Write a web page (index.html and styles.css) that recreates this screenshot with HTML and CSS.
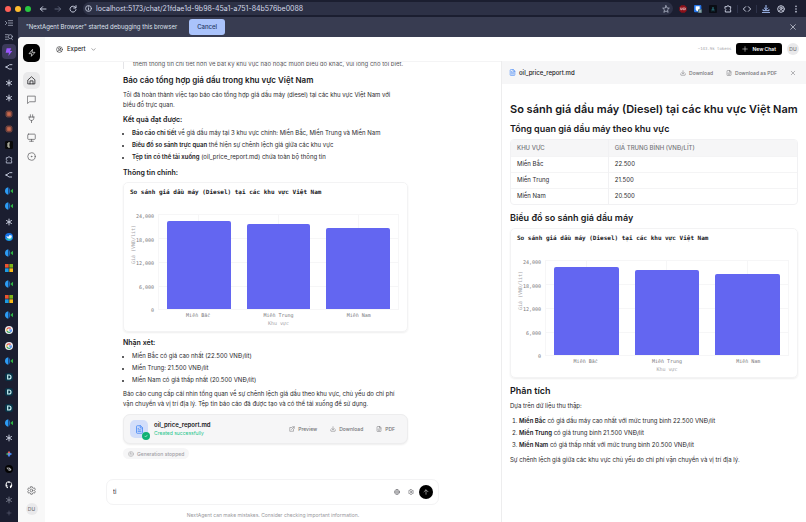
FILE: index.html
```html
<!DOCTYPE html>
<html lang="vi">
<head>
<meta charset="utf-8">
<title>NextAgent</title>
<link rel="stylesheet" href="styles.css">
</head>
<body>
<svg class="defs" aria-hidden="true">
  <symbol id="ast" viewBox="0 0 24 24"><path d="M12 2v20M3.500 7l17 10M20.500 7l-17 10" stroke="#c9cede" stroke-width="3" fill="none"/></symbol>
  <symbol id="branch" viewBox="0 0 24 24"><path d="M22 5H14L4 12l8 6h9" stroke="#bcc2d4" stroke-width="3" fill="none"/><circle cx="4" cy="12" r="3" fill="#bcc2d4"/></symbol>
  <symbol id="burst" viewBox="0 0 24 24"><path d="M12 1v22M1 12h22M4 4l16 16M20 4L4 20M7.500 2l9 20M2 16.500l20-9M2 7.500l20 9M7.500 22l9-20" stroke="#c9694d" stroke-width="2.200"/><circle cx="12" cy="12" r="5" fill="#c9694d"/></symbol>
  <symbol id="meet" viewBox="0 0 24 24"><path d="M10 1C3 2 0 7 0 12s3 10 10 11z" fill="#2d9cf4"/><path d="M11 2v20c3-2 4-5 4-10s-1-8-4-10z" fill="#176bc4"/><path d="M16 12l8-7v14z" fill="#2fb344"/></symbol>
  <symbol id="ms" viewBox="0 0 24 24"><path d="M0 0h11v11H0z" fill="#ea5430"/><path d="M13 0h11v11H13z" fill="#7cb518"/><path d="M0 13h11v11H0z" fill="#1b9ce3"/><path d="M13 13h11v11H13z" fill="#f8b919"/></symbol>
  <symbol id="goog" viewBox="0 0 24 24"><circle cx="12" cy="12" r="12" fill="#e9ebf0"/><g fill="none" stroke-width="3.500"><path d="M17 7.500A7 7 0 0 0 6 9" stroke="#df5145"/><path d="M6 9a7 7 0 0 0 0 6" stroke="#edb52c"/><path d="M6 15a7 7 0 0 0 10 3" stroke="#37a35b"/><path d="M16 18a7 7 0 0 0 3-6h-7" stroke="#4286ee"/></g></symbol>
  <symbol id="dee" viewBox="0 0 24 24"><rect width="24" height="24" rx="7" fill="#093448"/><path d="M8 6h4a6 6 0 0 1 0 12H8z" fill="none" stroke="#c7f1f4" stroke-width="3.500"/></symbol>
  <symbol id="puzzle" viewBox="0 0 24 24"><path d="M4 5h5a3 3 0 0 1 6 0h5v5a3 3 0 0 0 0 5v6H4v-5a3 3 0 0 0 0-5z"/></symbol>
  <symbol id="file" viewBox="0 0 24 24"><path d="M14 2H6a2 2 0 0 0-2 2v16a2 2 0 0 0 2 2h12a2 2 0 0 0 2-2V8zM14 2v6h6M8 9h2M8 13h8M8 17h8"/></symbol>
  <symbol id="filedown" viewBox="0 0 24 24"><path d="M14 2H6a2 2 0 0 0-2 2v16a2 2 0 0 0 2 2h12a2 2 0 0 0 2-2V8zM14 2v6h6M12 10v8M9 15l3 3 3-3"/></symbol>
  <symbol id="down" viewBox="0 0 24 24"><path d="M3 15v4a2 2 0 0 0 2 2h14a2 2 0 0 0 2-2v-4M7 10l5 5 5-5M12 15V3"/></symbol>
  <symbol id="close" viewBox="0 0 24 24"><path d="M5 5l14 14M19 5L5 19"/></symbol>
  <symbol id="gear" viewBox="0 0 24 24"><path d="M10 2h4l1 3 2 1 3-1 2 4-2 2v2l2 2-2 4-3-1-2 1-1 3h-4l-1-3-2-1-3 1-2-4 2-2v-2L2 9l2-4 3 1 2-1z"/><circle cx="12" cy="12" r="3.500"/></symbol>
  <symbol id="user" viewBox="0 0 24 24"><circle cx="12" cy="12" r="10"/><circle cx="12" cy="9.500" r="3.500"/><path d="M5.500 19c1-3 3.500-4.500 6.500-4.500s5.500 1.500 6.500 4.500"/></symbol>
</svg>

<div class="window">
  <header class="toolbar">
    <div class="lights"><i class="red"></i><i class="yellow"></i><i class="green"></i></div>
    <button class="tool" aria-label="Back"><svg class="ic" viewBox="0 0 24 24"><path d="M21 12H4M11 5l-7 7 7 7"/></svg></button>
    <button class="tool dim" aria-label="Forward"><svg class="ic" viewBox="0 0 24 24"><path d="M3 12h17M13 5l7 7-7 7"/></svg></button>
    <button class="tool" aria-label="Reload"><svg class="ic" viewBox="0 0 24 24"><path d="M20 8a9 9 0 1 0 1 6M21 2v7h-7"/></svg></button>
    <div class="address">
      <svg class="ic info" viewBox="0 0 24 24"><circle cx="12" cy="12" r="10"/><path d="M12 11v6M12 6v1"/></svg>
      <input class="url" aria-label="Address" value="localhost:5173/chat/21fdae1d-9b98-45a1-a751-84b576be0088">
      <svg class="ic star" viewBox="0 0 24 24"><path d="M12 2l3 7 7 .5-5.500 5 2 7.500-6.500-4-6.500 4 2-7.500-5.500-5L9 9z"/></svg>
    </div>
    <div class="extensions">
      <svg class="ic" viewBox="0 0 24 24"><path d="M7 1h10l6 6v10l-6 6H7l-6-6V7z" fill="#8b1119" stroke="none"/><path d="M5 9v5h4V9M13 9h6v5h-6z" stroke="#f3cbd0" stroke-width="2"/></svg>
      <svg class="ic" viewBox="0 0 24 24"><rect width="22" height="22" rx="3" fill="#2474e8" stroke="none"/><path d="M5 4h12v8c0 4-3 6-6 7-3-1-6-3-6-7z" fill="#fff" stroke="none"/><rect x="12" y="13" width="12" height="11" rx="2" fill="#55777a" stroke="none"/><path d="M18 16v5"/></svg>
      <svg class="ic" viewBox="0 0 24 24"><rect width="24" height="24" rx="3" fill="#0a0d14" stroke="none"/><path d="M9 18l3-12 3 12M9 14h6" stroke="#28717c" stroke-width="2"/></svg>
      <svg class="ic"><use href="#puzzle"/></svg>
      <i class="rule"></i>
      <svg class="ic" viewBox="0 0 24 24"><path d="M8 5l-7 7 7 7M16 5l7 7-7 7"/></svg>
      <i class="rule"></i>
      <svg class="ic blue" viewBox="0 0 24 24"><path d="M12 1v12M7 9l5 5 5-5M3 14v3h18v-3M1 23h22"/></svg>
      <svg class="ic"><use href="#user"/></svg>
      <svg class="ic" viewBox="0 0 24 24"><g fill="currentColor" stroke="none"><circle cx="12" cy="4" r="2.500"/><circle cx="12" cy="12" r="2.500"/><circle cx="12" cy="20" r="2.500"/></g></svg>
    </div>
  </header>

  <nav class="tabs" aria-label="Tabs">
    <div class="tab-tools">
      <svg class="ic" viewBox="0 0 24 24"><path d="M10 5h13M10 12h13M10 19h13M1 7l5 5-5 5"/></svg>
      <svg class="ic" viewBox="0 0 24 24"><path d="M1 5h9M1 12h6M1 19h9M19 16l4 5"/><circle cx="16" cy="11" r="6"/></svg>
    </div>
    <div class="tab-list">
      <a href="#" class="tab active" aria-label="Chat"><svg viewBox="0 0 24 24"><path d="M5 1h14l-4 8h7L10 24l2-10H2z" fill="#9b56ff"/></svg></a>
      <a href="#" class="tab"><svg><use href="#branch"/></svg></a>
      <a href="#" class="tab"><svg><use href="#ast"/></svg></a>
      <a href="#" class="tab"><svg><use href="#ast"/></svg></a>
      <a href="#" class="tab"><svg><use href="#burst"/></svg></a>
      <a href="#" class="tab"><svg><use href="#burst"/></svg></a>
      <a href="#" class="tab"><svg viewBox="0 0 24 24"><rect width="24" height="24" rx="4" fill="#0b0b0c"/><path d="M15 6H9v12h6M9 12h5" stroke="#dfe0c8" stroke-width="3" fill="none"/></svg></a>
      <a href="#" class="tab"><svg class="line"><use href="#puzzle"/></svg></a>
      <a href="#" class="tab"><svg><use href="#branch"/></svg></a>
      <a href="#" class="tab"><svg><use href="#meet"/></svg></a>
      <a href="#" class="tab"><svg><use href="#meet"/></svg></a>
      <a href="#" class="tab"><svg><use href="#ast"/></svg></a>
      <a href="#" class="tab"><svg viewBox="0 0 24 24"><circle cx="12" cy="12" r="12" fill="#1674e8"/><path d="M1 15c5 9 18 11 22-2-6 5-14 5-22 2z" fill="#27c9b8"/><path d="M4 9l6 2 4-5 7 2-2 7c-5 4-13 3-15-6z" fill="#e9faff"/></svg></a>
      <a href="#" class="tab"><svg><use href="#meet"/></svg></a>
      <a href="#" class="tab"><svg><use href="#ms"/></svg></a>
      <a href="#" class="tab"><svg><use href="#meet"/></svg></a>
      <a href="#" class="tab"><svg><use href="#ms"/></svg></a>
      <a href="#" class="tab"><svg><use href="#meet"/></svg></a>
      <a href="#" class="tab"><svg><use href="#goog"/></svg></a>
      <a href="#" class="tab"><svg><use href="#goog"/></svg></a>
      <a href="#" class="tab"><svg><use href="#meet"/></svg></a>
      <a href="#" class="tab"><svg><use href="#dee"/></svg></a>
      <a href="#" class="tab"><svg><use href="#dee"/></svg></a>
      <a href="#" class="tab"><svg><use href="#dee"/></svg></a>
      <a href="#" class="tab"><svg><use href="#meet"/></svg></a>
      <a href="#" class="tab"><svg><use href="#ast"/></svg></a>
      <a href="#" class="tab"><svg viewBox="0 0 24 24"><path d="M12 2l4 7H8z" fill="#ef625b"/><path d="M2 12l7-4v8z" fill="#44a860"/><path d="M22 12l-7-4v8z" fill="#478cf6"/><path d="M12 22l4-7H8z" fill="#478cf6"/><path d="M9 9h6v6H9z" fill="#7889d8"/></svg></a>
      <a href="#" class="tab"><svg viewBox="0 0 24 24"><circle cx="12" cy="12" r="12" fill="#030303"/><path d="M5 9h9v4h5M7 9l4 7h6l-3-7" stroke="#d9dbe0" stroke-width="2" fill="none"/></svg></a>
      <a href="#" class="tab"><svg viewBox="0 0 24 24"><path d="M12 1a11 11 0 0 0-4 21c1 0 1-3 1-4-3 1-4-2-5-3 2 0 3 2 5 1l1-1c-4-1-5-3-5-6l1-3V4l3 1h6l3-1v3l1 2c0 4-2 5-5 6l1 2v5A11 11 0 0 0 12 1z" fill="#fff"/></svg></a>
      <a href="#" class="tab faded"><svg><use href="#ast"/></svg></a>
    </div>
    <button class="tab-add" aria-label="New tab"><svg class="ic" viewBox="0 0 24 24"><path d="M12 4v16M4 12h16"/></svg></button>
  </nav>

  <div class="page">
    <div class="debug">
      <span>"NextAgent Browser" started debugging this browser</span>
      <button class="cancel">Cancel</button>
      <button class="dismiss" aria-label="Dismiss"><svg class="ic"><use href="#close"/></svg></button>
    </div>

    <div class="app">
      <nav class="rail" aria-label="Main">
        <a href="#" class="brand" aria-label="NextAgent"><svg class="ic" viewBox="0 0 24 24"><path d="M13 2L3 14h8l-1 8 11-12h-8z"/></svg></a>
        <a href="#" class="rail-item current" aria-label="Home"><svg class="ic" viewBox="0 0 24 24"><path d="M3 10l9-8 9 8v11H3zM8 21v-8h8v8"/></svg></a>
        <a href="#" class="rail-item" aria-label="Messages"><svg class="ic" viewBox="0 0 24 24"><path d="M2 3h20v15H7l-5 4z"/></svg></a>
        <a href="#" class="rail-item" aria-label="Connections"><svg class="ic" viewBox="0 0 24 24"><path d="M9 2v6M15 2v6M5 8h14M6 8v4c0 7 12 7 12 0V8M12 17v6"/></svg></a>
        <a href="#" class="rail-item" aria-label="Computer"><svg class="ic" viewBox="0 0 24 24"><rect x="2" y="3" width="20" height="14" rx="2"/><path d="M12 17v5M7 22h10"/></svg></a>
        <a href="#" class="rail-item" aria-label="Record"><svg class="ic" viewBox="0 0 24 24"><circle cx="12" cy="12" r="10"/><circle cx="12" cy="12" r="1"/></svg></a>
        <a href="#" class="rail-item last" aria-label="Settings"><svg class="ic"><use href="#gear"/></svg></a>
        <button class="avatar">DU</button>
      </nav>

      <div class="workspace">
        <header class="app-bar">
          <button class="mode"><svg class="ic"><use href="#user"/></svg>Expert<svg class="ic chevron" viewBox="0 0 24 24"><path d="M4 8l8 8 8-8"/></svg></button>
          <span class="tokens">~143.9k tokens</span>
          <button class="new-chat"><svg class="ic" viewBox="0 0 24 24"><path d="M12 3v18M3 12h18"/></svg>New Chat</button>
          <button class="avatar">DU</button>
        </header>

        <div class="columns">
          <main class="chat">
            <div class="thread">
              <blockquote>thêm thông tin chi tiết hơn về bất kỳ khu vực nào hoặc muốn biểu đồ khác, vui lòng cho tôi biết.</blockquote>
              <h2>Báo cáo tổng hợp giá dầu trong khu vực Việt Nam</h2>
              <p>Tôi đã hoàn thành việc tạo báo cáo tổng hợp giá dầu máy (diesel) tại các khu vực Việt Nam với biểu đồ trực quan.</p>
              <h3>Kết quả đạt được:</h3>
              <ul>
                <li><b>Báo cáo chi tiết</b> về giá dầu máy tại 3 khu vực chính: Miền Bắc, Miền Trung và Miền Nam</li>
                <li><b>Biểu đồ so sánh trực quan</b> thể hiện sự chênh lệch giá giữa các khu vực</li>
                <li><b>Tệp tin có thể tải xuống</b> (oil_price_report.md) chứa toàn bộ thông tin</li>
              </ul>
              <h3>Thông tin chính:</h3>
              <figure class="chart">
                <figcaption>So sánh giá dầu máy (Diesel) tại các khu vực Việt Nam</figcaption>
                <div class="chart-body">
                  <div class="y-title">Giá (VNĐ/lít)</div>
                  <div class="y-axis"><span>24,000</span><span>18,000</span><span>12,000</span><span>6,000</span><span>0</span></div>
                  <div class="plot">
                    <div class="slot"><div class="bar" style="height:94%"></div></div>
                    <div class="slot"><div class="bar" style="height:90%"></div></div>
                    <div class="slot"><div class="bar" style="height:86%"></div></div>
                  </div>
                  <div class="x-axis"><span>Miền Bắc</span><span>Miền Trung</span><span>Miền Nam</span></div>
                  <div class="x-title">Khu vực</div>
                </div>
              </figure>
              <h3>Nhận xét:</h3>
              <ul>
                <li>Miền Bắc có giá cao nhất (22.500 VNĐ/lít)</li>
                <li>Miền Trung: 21.500 VNĐ/lít</li>
                <li>Miền Nam có giá thấp nhất (20.500 VNĐ/lít)</li>
              </ul>
              <p>Báo cáo cung cấp cái nhìn tổng quan về sự chênh lệch giá dầu theo khu vực, chủ yếu do chi phí vận chuyển và vị trí địa lý. Tệp tin báo cáo đã được tạo và có thể tải xuống để sử dụng.</p>
              <div class="file-card">
                <div class="thumb"><svg class="ic"><use href="#file"/></svg><span class="done"><svg class="ic" viewBox="0 0 24 24"><path d="M5 13l5 5 9-11"/></svg></span></div>
                <div class="file-info"><strong>oil_price_report.md</strong><span>Created successfully</span></div>
                <button class="action"><svg class="ic" viewBox="0 0 24 24"><path d="M14 3h7v7M21 3L10 14M18 13v8H3V6h8"/></svg>Preview</button>
                <button class="action"><svg class="ic"><use href="#down"/></svg>Download</button>
                <button class="action"><svg class="ic"><use href="#filedown"/></svg>PDF</button>
              </div>
              <div class="stopped"><svg class="ic" viewBox="0 0 24 24"><circle cx="12" cy="12" r="10"/><rect x="8" y="8" width="8" height="8" rx="2"/></svg>Generation stopped</div>
            </div>
            <form class="composer">
              <input aria-label="Message" value="ti">
              <button type="button" aria-label="Web"><svg class="ic" viewBox="0 0 24 24"><circle cx="12" cy="12" r="10"/><path d="M2 12h20M12 2c-6 6-6 14 0 20 6-6 6-14 0-20z"/></svg></button>
              <button type="button" aria-label="Options"><svg class="ic"><use href="#gear"/></svg></button>
              <button type="button" class="send" aria-label="Send"><svg class="ic" viewBox="0 0 24 24"><path d="M12 21V4M4 11l8-8 8 8"/></svg></button>
            </form>
            <p class="disclaimer">NextAgent can make mistakes. Consider checking important information.</p>
          </main>

          <aside class="preview">
            <header class="preview-bar">
              <svg class="ic doc-icon"><use href="#file"/></svg>
              <strong>oil_price_report.md</strong>
              <button class="action"><svg class="ic"><use href="#down"/></svg>Download</button>
              <button class="action"><svg class="ic"><use href="#filedown"/></svg>Download as PDF</button>
              <button class="action" aria-label="Close"><svg class="ic"><use href="#close"/></svg></button>
            </header>
            <article class="doc">
              <h1>So sánh giá dầu máy (Diesel) tại các khu vực Việt Nam</h1>
              <h2>Tổng quan giá dầu máy theo khu vực</h2>
              <div class="table-wrap">
                <table>
                  <thead><tr><th>KHU VỰC</th><th>GIÁ TRUNG BÌNH (VNĐ/LÍT)</th></tr></thead>
                  <tbody>
                    <tr><td>Miền Bắc</td><td>22.500</td></tr>
                    <tr><td>Miền Trung</td><td>21.500</td></tr>
                    <tr><td>Miền Nam</td><td>20.500</td></tr>
                  </tbody>
                </table>
              </div>
              <h2>Biểu đồ so sánh giá dầu máy</h2>
              <figure class="chart">
                <figcaption>So sánh giá dầu máy (Diesel) tại các khu vực Việt Nam</figcaption>
                <div class="chart-body">
                  <div class="y-title">Giá (VNĐ/lít)</div>
                  <div class="y-axis"><span>24,000</span><span>18,000</span><span>12,000</span><span>6,000</span><span>0</span></div>
                  <div class="plot">
                    <div class="slot"><div class="bar" style="height:94%"></div></div>
                    <div class="slot"><div class="bar" style="height:90%"></div></div>
                    <div class="slot"><div class="bar" style="height:86%"></div></div>
                  </div>
                  <div class="x-axis"><span>Miền Bắc</span><span>Miền Trung</span><span>Miền Nam</span></div>
                  <div class="x-title">Khu vực</div>
                </div>
              </figure>
              <h2>Phân tích</h2>
              <p>Dựa trên dữ liệu thu thập:</p>
              <ol>
                <li><b>Miền Bắc</b> có giá dầu máy cao nhất với mức trung bình 22.500 VNĐ/lít</li>
                <li><b>Miền Trung</b> có giá trung bình 21.500 VNĐ/lít</li>
                <li><b>Miền Nam</b> có giá thấp nhất với mức trung bình 20.500 VNĐ/lít</li>
              </ol>
              <p>Sự chênh lệch giá giữa các khu vực chủ yếu do chi phí vận chuyển và vị trí địa lý.</p>
            </article>
          </aside>
        </div>
      </div>
    </div>
  </div>
</div>
</body>
</html>
```
FILE: styles.css
```css
* { box-sizing: border-box; }
body, h1, h2, h3, p, ul, ol, figure, blockquote { margin: 0; padding: 0; }
body { font: 6px/10px Inter, "Liberation Sans", sans-serif; color: #29292c; background: #1b1e30; }
button, input { font: inherit; color: inherit; border: 0; background: none; padding: 0; margin: 0; outline: 0; }
button { display: flex; align-items: center; justify-content: center; white-space: nowrap; }
a { color: inherit; text-decoration: none; }
.defs { position: absolute; width: 0; height: 0; }
.ic { display: block; flex: none; width: 8px; height: 8px; fill: none; stroke: currentColor; stroke-width: 2; stroke-linecap: round; stroke-linejoin: round; }

.window { display: grid; grid-template: 17px minmax(0, 1fr) / 18px minmax(0, 1fr); height: 100vh; overflow: hidden; }
.toolbar { grid-column: 1 / 3; display: flex; align-items: center; background: #1b1e30; color: #c6cbdc; padding: 0 6px 0 5px; }
.toolbar .ic { stroke-width: 3; }
.lights { display: flex; gap: 4px; margin-right: 4px; }
.lights i { width: 6px; height: 6px; border-radius: 50%; }
.red { background: #ff5f57; }
.yellow { background: #febc2e; }
.green { background: #28c840; }
.tool { width: 15px; }
.dim { color: #5e647a; }
.address { flex: 1; display: flex; align-items: center; height: 13px; margin-left: 3px; padding: 0 3px 0 1px; gap: 4px; border-radius: 7px; background: #2d3146; }
.address .info { width: 7px; height: 7px; margin-left: 1px; }
.address .star { stroke-width: 2; }
.url { flex: 1; min-width: 0; font-size: 7px; color: #d4d8e6; }
.extensions { display: flex; align-items: center; gap: 7px; padding-left: 6px; }
.rule { width: 1px; height: 8px; margin: 0 -2px; background: #2d3249; }
.blue { color: #a9c4fb; }

.tabs { display: flex; flex-direction: column; min-height: 0; background: #1b1e30; color: #bcc2d4; }
.tab-tools { display: flex; flex-direction: column; align-items: center; gap: 6px; padding: 2px 0 3px; }
.tab-list { flex: 1; min-height: 0; display: flex; flex-direction: column; padding: 0 2px; }
.tab { flex: 1; min-height: 0; display: flex; align-items: center; justify-content: center; border-radius: 4px; }
.tab svg { width: 8px; height: 8px; }
.tab .line { fill: none; stroke: #a7adc0; stroke-width: 3; }
.active { background: #3c3a5a; }
.faded { opacity: .5; }
.tab-add { height: 14px; color: #6d7287; padding-bottom: 4px; }
.tab-add .ic { width: 6px; height: 6px; }

.page { display: flex; flex-direction: column; min-width: 0; min-height: 0; background: #383c51; }
.debug { display: flex; align-items: center; height: 20px; padding: 0 9px 0 8px; color: #dfe2ed; }
.cancel { height: 16px; padding: 0 8px; margin-left: 12px; border-radius: 3px; background: #aac3fb; color: #1f3767; font-weight: 500; }
.dismiss { margin-left: auto; }
.app { flex: 1; display: flex; min-height: 0; background: #fff; border-radius: 4px 0 0 0; overflow: hidden; }
.rail { width: 27px; flex: none; display: flex; flex-direction: column; align-items: center; padding: 7px 0 7px; background: #f8f8f8; color: #636366; }
.brand { display: grid; place-items: center; width: 17px; height: 18px; border-radius: 5px; background: #000; color: #fff; margin-bottom: 10px; }
.rail-item { display: grid; place-items: center; width: 17px; height: 17px; margin-bottom: 2px; border-radius: 5px; }
.rail-item .ic { width: 9px; height: 9px; }
.current { background: #e9e9ea; color: #1a1a1c; }
.last { margin-top: auto; margin-bottom: 4px; }
.avatar { width: 12px; height: 12px; border-radius: 50%; background: #e9e9eb; color: #77777b; font-size: 5px; font-weight: 500; }

.workspace { flex: 1; min-width: 0; display: flex; flex-direction: column; }
.app-bar { display: flex; align-items: center; height: 24px; padding: 0 7px 0 11px; }
.mode { gap: 4px; font-weight: 500; }
.mode .ic { width: 7px; height: 7px; }
.mode .chevron { width: 5px; height: 5px; margin-left: 1px; }
.tokens { margin-left: auto; font: 4px/10px "DejaVu Sans Mono", monospace; color: #a3a3a8; }
.new-chat { gap: 4px; height: 12px; margin: 0 5px; padding: 0 6px; border-radius: 3px; background: #000; color: #fff; font-weight: 600; font-size: 5px; }
.new-chat .ic { width: 6px; height: 6px; }
.columns { flex: 1; min-height: 0; display: grid; grid-template-columns: 456fr 305fr; }
.chat { display: flex; flex-direction: column; min-width: 0; min-height: 0; border-top: 1px solid #f4f4f5; }
.thread { flex: 1; min-height: 0; overflow: hidden; padding: 0 93px 0 78px; }
blockquote { border-left: 1px solid #e4e4e7; padding-left: 9px; margin-top: -3px; color: #55555a; white-space: nowrap; }
h1, h2, h3, b, strong { font-weight: 600; color: #18181b; }
h1 { font-size: 11px; line-height: 14px; }
h2 { font-size: 8px; line-height: 12px; }
h3 { font-size: 7px; line-height: 10px; }
.thread h2 { margin: 5px 0 4px; }
.thread h3 { margin: 5px 0 3px; }
ul, ol { display: flex; flex-direction: column; gap: 2px; padding-left: 9px; margin: 3px 0 4px; }
.thread ul + h3 { margin-top: 6px; }
.thread p { margin: 4px 0; padding-right: 6px; }
li::marker { font-size: 5px; }
ol li::marker { font-size: 6px; }

.chart { border: 1px solid #f3f3f4; border-radius: 5px; padding: 4px 8px 5px 6px; box-shadow: 0 1px 2px #00000012; }
.thread .chart { margin: 4px 0 6px; }
.chart figcaption { font: bold 6px/10px "DejaVu Sans Mono", monospace; color: #18181b; white-space: nowrap; }
.chart-body { display: grid; grid-template: 96px 10px 6px / 6px 20px minmax(0, 1fr); column-gap: 1px; margin-top: 17px; font: 5px/6px "DejaVu Sans Mono", monospace; color: #77777b; }
.y-title { writing-mode: vertical-rl; transform: rotate(180deg); text-align: center; padding-top: 36px; color: #a5a5a9; white-space: nowrap; }
.y-axis { display: flex; flex-direction: column; justify-content: space-between; align-items: flex-end; margin: -1px 0 -3px; padding-right: 3px; }
.plot { display: grid; grid-template-columns: repeat(3, 1fr); border: 1px solid #f6f6f7; background: repeating-linear-gradient(#fff0 0 23px, #f6f6f7 23px 24px); }
.slot { display: flex; align-items: flex-end; justify-content: center; background: linear-gradient(#f6f6f7, #f6f6f7) center / 1px 100% no-repeat; }
.bar { width: 80%; background: #6366f1; border-radius: 2px 2px 0 0; }
.x-axis { grid-column: 3; display: grid; grid-template-columns: repeat(3, 1fr); text-align: center; padding-top: 2px; }
.x-title { grid-column: 3; text-align: center; color: #a5a5a9; }

.file-card { display: flex; align-items: center; height: 30px; margin-top: 5px; padding: 0 12px 0 6px; border: 1px solid #ededee; border-radius: 7px; background: #f6f6f7; box-shadow: 0 1px 2px #00000012; }
.thumb { position: relative; display: grid; place-items: center; width: 18px; height: 18px; border-radius: 5px; background: #d3defa; color: #3b82f6; }
.thumb > .ic { width: 9px; height: 9px; }
.done { position: absolute; right: -2px; bottom: -2px; display: grid; place-items: center; width: 8px; height: 8px; border-radius: 50%; background: #10b173; color: #fff; }
.done .ic { width: 4px; height: 4px; stroke-width: 3; }
.file-info { display: flex; flex-direction: column; margin: 0 auto 0 6px; line-height: 8px; }
.file-info span { color: #22c58b; font-size: 5px; }
.action { gap: 3px; color: #717175; font-weight: 500; font-size: 5px; margin-left: 13px; }
.action .ic { width: 6px; height: 6px; }
.stopped { display: flex; width: fit-content; align-items: center; gap: 3px; height: 11px; margin-top: 4px; padding: 0 5px; border-radius: 6px; background: #f6f6f7; color: #a0a0a5; font-size: 5px; font-weight: 500; }
.stopped .ic { width: 6px; height: 6px; }
.composer { display: flex; align-items: center; height: 26px; gap: 8px; margin: 0 62px 0 61px; padding: 0 5px 0 6px; border: 1px solid #f3f3f4; border-radius: 7px; color: #55555a; }
.composer input { flex: 1; min-width: 0; color: #29292c; }
.composer .ic { width: 6px; height: 6px; }
.send { width: 14px; height: 14px; margin-left: -3px; border-radius: 50%; background: #000; color: #fff; }
.disclaimer { padding: 5px 0 2px; text-align: center; font-size: 5px; color: #98989d; }

.preview { min-width: 0; border-left: 1px solid #ededee; }
.preview-bar { display: flex; align-items: center; height: 23px; padding: 0 10px 0 7px; background: #f6f6f7; }
.preview-bar strong { margin: 0 auto 0 3px; font-weight: 500; }
.doc-icon { width: 7px; height: 7px; color: #3b82f6; }
.doc { padding: 18px 8px 0; }
.doc h1 { white-space: nowrap; }
.doc h2 { margin: 7px 0 4px; font-size: 9px; }
.doc ol { margin: 5px 0; }
.table-wrap { border: 1px solid #f1f1f3; border-radius: 4px; overflow: hidden; }
table { width: 100%; border-collapse: collapse; }
th, td { height: 16px; padding: 0 6px; text-align: left; border-top: 1px solid #f4f4f5; }
th:first-child, td:first-child { width: 34%; border-right: 1px solid #f1f1f3; }
th { border-top: 0; background: #f6f6f7; color: #77777b; font-weight: 500; }
```
